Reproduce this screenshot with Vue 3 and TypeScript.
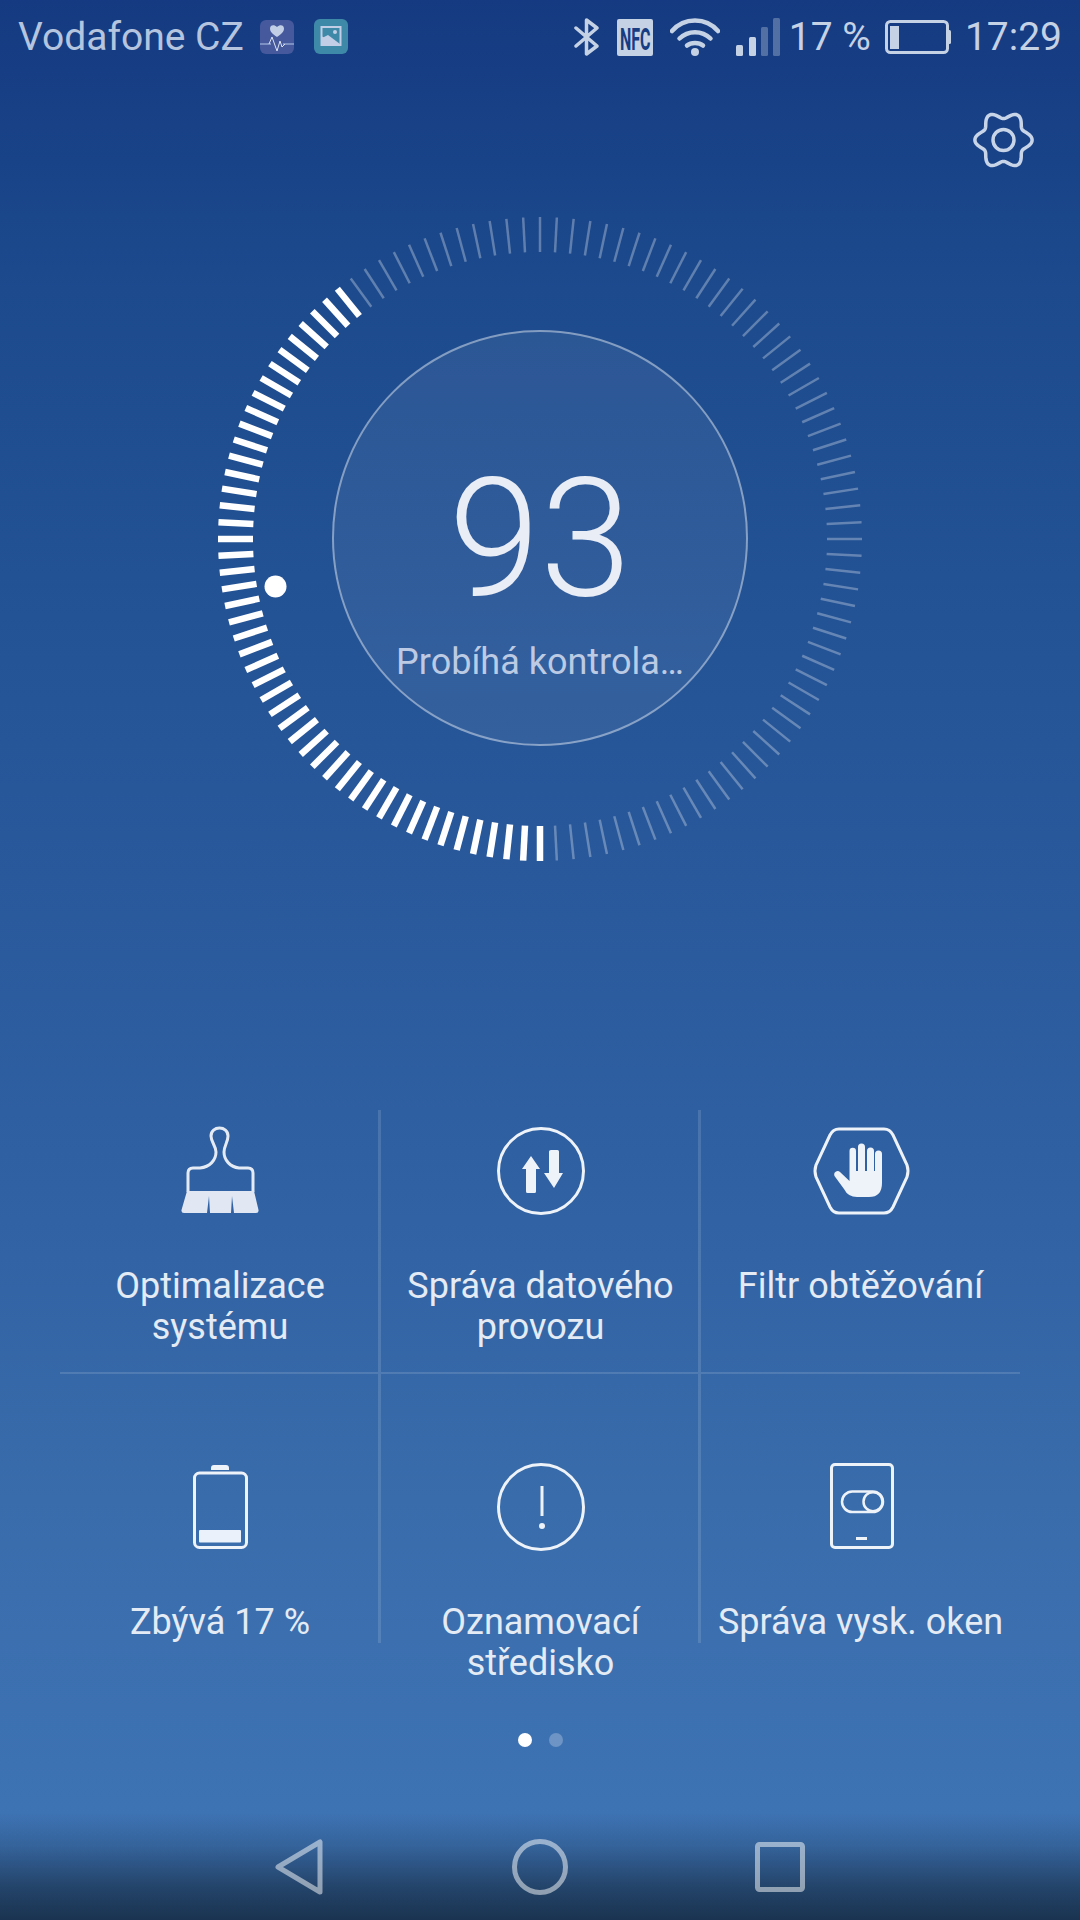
<script setup lang="ts">
interface Tool {
  id: string
  label: string[]
}

const tools: Tool[] = [
  { id: 'brush', label: ['Optimalizace', 'systému'] },
  { id: 'data', label: ['Správa datového', 'provozu'] },
  { id: 'block', label: ['Filtr obtěžování'] },
  { id: 'battery', label: ['Zbývá 17 %'] },
  { id: 'alert', label: ['Oznamovací', 'středisko'] },
  { id: 'toggle', label: ['Správa vysk. oken'] },
]

// 120 ticks clockwise from the top, the scanned part is 180deg..321deg
const ticks = Array.from({ length: 120 }, (_, i) => {
  const deg = i * 3
  const a = (deg * Math.PI) / 180
  const on = deg >= 180 && deg <= 321
  return {
    x1: 325 + Math.sin(a) * 322,
    y1: 325 - Math.cos(a) * 322,
    x2: 325 + Math.sin(a) * 287,
    y2: 325 - Math.cos(a) * 287,
    on,
  }
})

// wavy six lobe outline of the settings gear
const gearPath = (() => {
  const pts: string[] = []
  for (let i = 0; i < 180; i++) {
    const t = (i * 2 * Math.PI) / 180
    const r = 25 + 3.6 * Math.cos(6 * t)
    pts.push(`${(30.5 + Math.cos(t) * r).toFixed(2)} ${(30 + Math.sin(t) * r).toFixed(2)}`)
  }
  return 'M' + pts.join('L') + 'Z'
})()
</script>

<template>
  <div class="page">
    <div class="status">
      <span class="carrier">Vodafone CZ</span>
      <svg class="note" width="34" height="34" viewBox="0 0 34 34">
        <rect width="34" height="34" rx="6" fill="#46599d" />
        <path d="M0 24H11M23 24H34" stroke="#8fa3cf" stroke-width="1.5" />
        <path d="M17 17c-4-3-7-5-7-8.500C10 5 14 4 17 7c3-3 7-2 7 1.500C24 12 21 14 17 17z" fill="#c2cee6" />
        <path d="M9 24l3-7 5 14 3-10 2 6 3-3" fill="none" stroke="#dbe3f2" stroke-width="1" />
      </svg>
      <svg class="note note-second" width="34" height="35" viewBox="0 0 34 35">
        <rect width="34" height="35" rx="6" fill="#3f89a8" />
        <rect x="7.500" y="8" width="19" height="18" fill="none" stroke="#c2cee6" stroke-width="2" />
        <path d="M7 26V17l8 4 5 5z" fill="#c2cee6" />
        <path d="M8 19l6-3 12 9v2H8z" fill="#c2cee6" />
        <circle cx="21" cy="13" r="2" fill="#c2cee6" />
      </svg>
      <div class="status-right">
        <svg width="27" height="38" viewBox="0 0 27 38">
          <path d="M3 10L24 28L13.500 36V2L24 10L3 28" fill="none" stroke="#c5d1e5" stroke-width="3.500" stroke-linejoin="round" stroke-linecap="round" />
        </svg>
        <svg class="nfc" width="36" height="37" viewBox="0 0 36 37">
          <rect width="36" height="37" rx="2" fill="#c5d1e5" />
          <text transform="translate(3 31) scale(.5 1)" font-family="Roboto, sans-serif" font-weight="700" font-size="32" fill="#163c82">NFC</text>
        </svg>
        <svg class="wifi" width="50" height="38" viewBox="0 0 50 38">
          <g fill="none" stroke="#c5d1e5" stroke-width="4.500" stroke-linecap="round">
            <path d="M2 13C14 -1 36 -1 48 13" />
            <path d="M9.500 20.500C18 12 32 12 40.500 20.500" />
            <path d="M17 27.500C21 24 29 24 33 27.500" />
          </g>
          <circle cx="25" cy="34" r="4" fill="#c5d1e5" />
        </svg>
        <svg class="signal" width="44" height="38" viewBox="0 0 44 38">
          <rect x="0" y="27" width="7" height="11" rx="1.500" fill="#c5d1e5" />
          <rect x="13" y="19" width="7" height="19" rx="1.500" fill="#c5d1e5" />
          <rect x="25" y="9" width="7" height="29" rx="1.500" fill="#c5d1e5" opacity=".35" />
          <rect x="37" y="0" width="7" height="38" rx="1.500" fill="#c5d1e5" opacity=".35" />
        </svg>
        <span class="pct">17 %</span>
        <svg class="batt" width="66" height="34" viewBox="0 0 66 34">
          <rect x="1.500" y="1.500" width="61" height="31" rx="4" fill="none" stroke="#c5d1e5" stroke-width="3" />
          <rect x="5" y="6" width="9" height="23" fill="#c5d1e5" />
          <path d="M63 10h1.500a1.500 1.500 0 0 1 1.500 1.500v11a1.500 1.500 0 0 1-1.500 1.500H63z" fill="#c5d1e5" />
        </svg>
        <span class="time">17:29</span>
      </div>
    </div>

    <div class="settings">
      <svg width="62" height="60" viewBox="0 0 62 60">
        <path :d="gearPath" fill="none" stroke="#c8d4e8" stroke-width="3.500" stroke-linejoin="round" />
        <circle cx="30.500" cy="30" r="10.500" fill="none" stroke="#c8d4e8" stroke-width="3.500" />
      </svg>
    </div>

    <div class="dial">
      <svg class="ring" width="650" height="650" viewBox="0 0 650 650">
        <line
          v-for="(t, i) in ticks"
          :key="i"
          :x1="t.x1"
          :y1="t.y1"
          :x2="t.x2"
          :y2="t.y2"
          :stroke="t.on ? '#fff' : 'rgba(255,255,255,.3)'"
          :stroke-width="t.on ? 6.500 : 2.500"
        />
        <circle cx="60.500" cy="372.500" r="11" fill="#fff" />
      </svg>
      <div class="core">
        <div class="score">93</div>
        <div class="state">Probíhá kontrola…</div>
      </div>
    </div>

    <div class="grid">
      <div v-for="t in tools" :key="t.id" class="cell">
        <div class="icon">
          <svg v-if="t.id === 'brush'" width="100" height="100" viewBox="0 0 100 100">
            <g transform="translate(11 0)">
              <path d="M7 71V52Q7 47 12 47H19C29 46 35 39 35 31C35 25 30 21 30 15C30 10 34 7 38.500 7C43 7 47 10 47 15C47 21 43 25 43 31C43 39 49 46 58 47H67Q72 47 72 52V71" fill="none" stroke="#e4ebf5" stroke-width="3" />
              <path d="M6 70H73L77.500 89Q78 92 75 92H53L51 75L50 92H29L28 75L26 92H3Q0 92 .5 89Z" fill="#e1e8f3" />
            </g>
          </svg>
          <svg v-else-if="t.id === 'data'" width="100" height="100" viewBox="0 0 100 100">
            <circle cx="50" cy="50" r="42.500" fill="none" stroke="#eef2f9" stroke-width="3" />
            <path d="M40 35L49 48H45V70.500Q45 72 43.500 72H36.500Q35 72 35 70.500V48H31Z" fill="#eef2f9" />
            <path d="M60 29H66.500Q68 29 68 30.500V52H72L63 67L53 52H58V30.500Q58 29 60 29Z" fill="#eef2f9" />
          </svg>
          <svg v-else-if="t.id === 'block'" width="120" height="100" viewBox="0 0 120 100">
            <path d="M38 8H83Q89 8 92 14L106 44Q108 50 106 56L92 86Q89 92 83 92H38Q32 92 29 86L15 56Q13 50 15 44L29 14Q32 8 38 8Z" fill="none" stroke="#eef2f9" stroke-width="3" />
            <path d="M48.500 30a3.250 3.250 0 0 1 6.500 0V50H57V26a3.500 3.500 0 0 1 7 0V50H66V30a3.500 3.500 0 0 1 7 0V50H74V33a3.500 3.500 0 0 1 7 0V62Q81 76 68 76H56Q47 76 43 68L33.500 55a3.500 3.500 0 0 1 5.500-4L48.500 60Z" fill="#eef2f9" />
          </svg>
          <svg v-else-if="t.id === 'battery'" width="100" height="100" viewBox="0 0 100 100">
            <path d="M41 13V11Q41 8 44 8H56Q59 8 59 11V13Z" fill="#eef2f9" />
            <rect x="24.500" y="16" width="52" height="74.500" rx="5" fill="none" stroke="#eef2f9" stroke-width="3" />
            <rect x="29" y="73" width="42" height="12.500" rx="1" fill="#eaf1fa" />
          </svg>
          <svg v-else-if="t.id === 'alert'" width="100" height="100" viewBox="0 0 100 100">
            <circle cx="50" cy="50" r="42.500" fill="none" stroke="#eef2f9" stroke-width="3" />
            <rect x="49.500" y="29" width="3" height="30" fill="#eef2f9" />
            <circle cx="51" cy="69" r="3" fill="#eef2f9" />
          </svg>
          <svg v-else width="100" height="100" viewBox="0 0 100 100">
            <rect x="20.500" y="7.500" width="61" height="83" rx="3.500" fill="none" stroke="#eef2f9" stroke-width="3" />
            <rect x="31" y="34.500" width="41" height="20.500" rx="10.250" fill="none" stroke="#eef2f9" stroke-width="2.500" />
            <circle cx="62" cy="44.700" r="9.500" fill="none" stroke="#eef2f9" stroke-width="2.500" />
            <rect x="45" y="80" width="11" height="3" fill="#eef2f9" />
          </svg>
        </div>
        <div class="label">
          <div v-for="line in t.label" :key="line">{{ line }}</div>
        </div>
      </div>
    </div>

    <div class="dots">
      <span class="dot dot-on"></span>
      <span class="dot"></span>
    </div>

    <div class="nav">
      <div class="nav-item">
        <svg width="52" height="58" viewBox="0 0 52 58">
          <path d="M46 4V54L4 29Z" fill="none" stroke="rgba(255,255,255,.5)" stroke-width="5" stroke-linejoin="round" />
        </svg>
      </div>
      <div class="nav-item">
        <svg width="58" height="58" viewBox="0 0 58 58">
          <circle cx="29" cy="29" r="25.500" fill="none" stroke="rgba(255,255,255,.5)" stroke-width="5" />
        </svg>
      </div>
      <div class="nav-item">
        <svg width="50" height="50" viewBox="0 0 50 50">
          <rect x="2.500" y="2.500" width="45" height="45" rx="2" fill="none" stroke="rgba(255,255,255,.5)" stroke-width="5" />
        </svg>
      </div>
    </div>
  </div>
</template>

<style scoped>
.page {
  position: relative;
  width: 1080px;
  height: 1920px;
  display: flex;
  flex-direction: column;
  overflow: hidden;
  font-family: Roboto, "Liberation Sans", sans-serif;
  background: linear-gradient(180deg, #153a81 0%, #1c4a8d 15%, #2f60a2 60%, #396cab 78%, #3f75b6 100%);
}

.status {
  height: 72px;
  display: flex;
  align-items: center;
  padding: 2px 18px 0 18px;
  box-sizing: border-box;
  color: #c5d1e5;
  font-size: 39px;
}
.carrier { color: #b5c5df; }
.note { margin-left: 16px; margin-top: -1px; }
.note-second { margin-left: 20px; }
.status-right {
  margin-left: auto;
  display: flex;
  align-items: center;
}
.nfc { margin-left: 17px; overflow: visible; }
.wifi { margin-left: 17px; }
.signal { margin-left: 16px; }
.pct { margin-left: 9px; }
.batt { margin-left: 14px; }
.time { margin-left: 14px; }

.settings {
  display: flex;
  justify-content: flex-end;
  margin-top: 38px;
  padding-right: 45px;
  height: 60px;
}

.dial {
  position: relative;
  align-self: center;
  width: 650px;
  height: 650px;
  margin-top: 44px;
  padding-top: 116px;
  box-sizing: border-box;
  flex-shrink: 0;
}
.ring {
  position: absolute;
  left: 0;
  top: 0;
}
.core {
  width: 416px;
  height: 416px;
  margin: 0 auto;
  box-sizing: border-box;
  border: 2px solid rgba(255, 255, 255, 0.42);
  border-radius: 50%;
  background: rgba(255, 255, 255, 0.065);
  display: flex;
  flex-direction: column;
  align-items: center;
  padding-top: 124px;
}
.score {
  font-size: 165px;
  font-weight: 300;
  line-height: 165px;
  color: #e8edf6;
}
.state {
  margin-top: 19px;
  font-size: 36px;
  line-height: 44px;
  color: #bccbe3;
}

.grid {
  display: grid;
  grid-template-columns: 321px 320px 319px;
  grid-template-rows: 262px 271px;
  margin: 246px 60px 0;
  color: #e4ebf5;
  flex-shrink: 0;
}
.cell {
  padding-top: 11px;
  padding-left: 2px;
  box-sizing: border-box;
  border-right: 3px solid rgba(255, 255, 255, 0.13);
}
.cell:nth-child(3n) {
  padding-left: 0;
  border-right: none;
}
.cell:nth-child(n + 4) {
  padding-top: 83px;
  border-top: 2px solid rgba(255, 255, 255, 0.13);
}
.icon {
  height: 100px;
  display: flex;
  justify-content: center;
}
.label {
  margin-top: 45px;
  font-size: 36px;
  line-height: 41px;
  text-align: center;
  white-space: nowrap;
}

.dots {
  display: flex;
  justify-content: center;
  align-items: center;
  gap: 17px;
  margin-top: 90px;
}
.dot {
  width: 14px;
  height: 14px;
  border-radius: 50%;
  background: rgba(255, 255, 255, 0.25);
}
.dot-on { background: #fff; }

.nav {
  margin-top: auto;
  height: 107px;
  padding: 0 180px;
  display: flex;
  background: linear-gradient(180deg, rgba(26, 51, 80, 0) 0%, rgba(26, 51, 80, 0.25) 30%, rgba(26, 51, 80, 0.75) 70%, #1a3350 100%);
}
.nav-item {
  flex: 1;
  display: flex;
  align-items: center;
  justify-content: center;
}
</style>

<style>
html, body {
  margin: 0;
  background: #153a81;
}
</style>
